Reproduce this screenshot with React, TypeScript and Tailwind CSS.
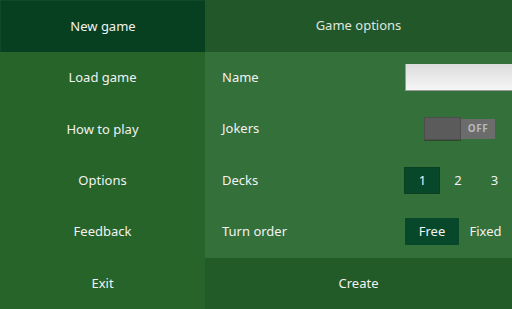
import React from "react";

const font = { fontFamily: '"Noto Sans", "Open Sans", sans-serif' };

export default function App() {
  const menu = ["New game", "Load game", "How to play", "Options", "Feedback", "Exit"];
  return (
    <div className="w-[512px] h-[309px] flex overflow-hidden text-[13px] text-[#f2f2f2]" style={font}>
      <div className="w-[205px] h-full flex flex-col bg-[#266429]">
        {menu.map((m, i) => (
          <div
            key={m}
            className={`flex-1 flex items-center justify-center ${i === 0 ? "bg-[#064020] border-t border-l border-[#0e4a28]" : ""}`}
          >
            {m}
          </div>
        ))}
      </div>
      <div className="flex-1 h-full flex flex-col">
        <div className="flex-1 flex items-center justify-center bg-[#22572a] text-[#dfe6df]">Game options</div>
        <div className="flex-[4] flex flex-col bg-[#34703a]">
          <div className="flex-1 flex items-center pl-[17px]">
            <span className="flex-1">Name</span>
            <div className="w-[107px] h-[27px] bg-gradient-to-b from-[#dcdcdc] to-[#f6f6f6] border-l border-b border-[#9a9a9a]" />
          </div>
          <div className="flex-1 flex items-center pl-[17px]">
            <span className="flex-1">Jokers</span>
            <div className="flex items-center mr-[17px]">
              <div className="w-[37px] h-[23px] bg-[#5b5b5b] border border-[#4e4e4e] shadow-[0_1px_0_#2a4a2a]" />
              <div className="w-[34px] h-[20px] bg-[#6c6c6c] flex items-center justify-center text-[10px] font-bold text-[#b8b8b8] tracking-[0.5px]">
                OFF
              </div>
            </div>
          </div>
          <div className="flex-1 flex items-center pl-[17px]">
            <span className="flex-1">Decks</span>
            <div className="flex">
              <div className="w-[36px] h-[27px] flex items-center justify-center bg-[#07472a] border border-[#0b3f22] pl-px">1</div>
              <div className="w-[36px] h-[27px] flex items-center justify-center">2</div>
              <div className="w-[36px] h-[27px] flex items-center justify-center pl-px">3</div>
            </div>
          </div>
          <div className="flex-1 flex items-center pl-[17px]">
            <span className="flex-1">Turn order</span>
            <div className="flex">
              <div className="w-[54px] h-[27px] flex items-center justify-center bg-[#07472a]">Free</div>
              <div className="w-[53px] h-[27px] flex items-center justify-center">Fixed</div>
            </div>
          </div>
        </div>
        <div className="flex-1 flex items-center justify-center bg-[#225a28]">Create</div>
      </div>
    </div>
  );
}
